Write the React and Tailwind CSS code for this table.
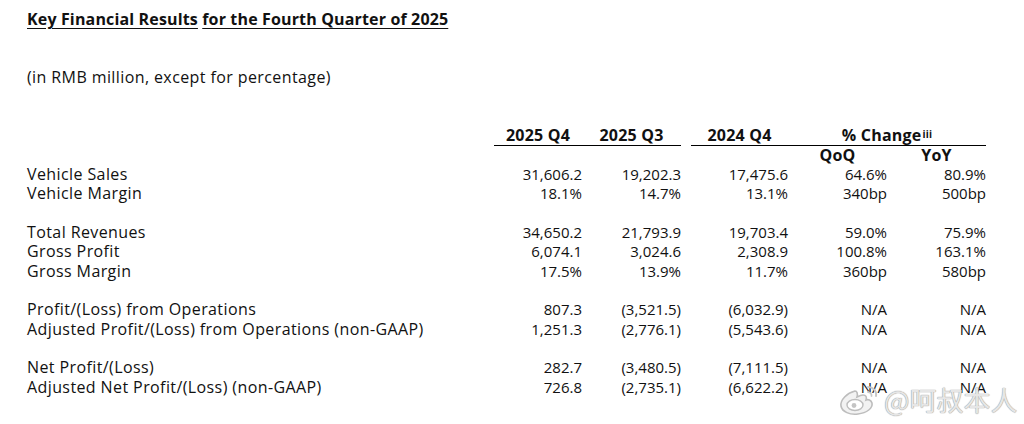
const groups = [
  [
    ['Vehicle Sales', '31,606.2', '19,202.3', '17,475.6', '64.6%', '80.9%'],
    ['Vehicle Margin', '18.1%', '14.7%', '13.1%', '340bp', '500bp'],
  ],
  [
    ['Total Revenues', '34,650.2', '21,793.9', '19,703.4', '59.0%', '75.9%'],
    ['Gross Profit', '6,074.1', '3,024.6', '2,308.9', '100.8%', '163.1%'],
    ['Gross Margin', '17.5%', '13.9%', '11.7%', '360bp', '580bp'],
  ],
  [
    ['Profit/(Loss) from Operations', '807.3', '(3,521.5)', '(6,032.9)', 'N/A', 'N/A'],
    ['Adjusted Profit/(Loss) from Operations (non-GAAP)', '1,251.3', '(2,776.1)', '(5,543.6)', 'N/A', 'N/A'],
  ],
  [
    ['Net Profit/(Loss)', '282.7', '(3,480.5)', '(7,111.5)', 'N/A', 'N/A'],
    ['Adjusted Net Profit/(Loss) (non-GAAP)', '726.8', '(2,735.1)', '(6,622.2)', 'N/A', 'N/A'],
  ],
];

const cols = 'grid grid-cols-[467px_88px_99px_10px_97px_99px_99px]';

function DataRow({ row }) {
  const [label, a, b, c, d, e] = row;
  return (
    <div className={`${cols} h-[19.33px] items-center leading-[19px]`}>
      <div className="whitespace-nowrap text-[16px] tracking-[0.4px]">{label}</div>
      <div className="text-right">{a}</div>
      <div className="text-right">{b}</div>
      <div />
      <div className="text-right">{c}</div>
      <div className="text-right">{d}</div>
      <div className="text-right">{e}</div>
    </div>
  );
}

function WeiboMark() {
  return (
    <div className="absolute left-[838px] top-[383px] flex items-center gap-[4px] pointer-events-none">
      <svg width="42" height="34" viewBox="0 0 42 34" fill="none">
        <path
          d="M17 8c-8 2-15 9-14 15 1 6 9 9 17 8 9-1 15-6 14-11-1-3-4-4-6-3 1-3 0-5-3-5-2 0-4 1-6 2 1-3 0-6-2-6z"
          fill="#f2f2f2"
          stroke="#bdbdbd"
          strokeWidth="1.6"
        />
        <ellipse cx="17" cy="22" rx="8" ry="5.5" fill="#ffffff" stroke="#bdbdbd" strokeWidth="1.4" />
        <circle cx="16" cy="22.5" r="2.4" fill="#c4c4c4" />
        <path d="M30 4c5 0 9 4 8 9" stroke="#c8c8c8" strokeWidth="2" strokeLinecap="round" />
        <path d="M30 9c2 0 4 2 3.5 4" stroke="#c8c8c8" strokeWidth="1.8" strokeLinecap="round" />
      </svg>
      <span className="font-['Noto_Sans_CJK_SC',sans-serif] text-[27px] leading-[32px] text-[#e6e6e6] [text-shadow:0_0_1px_#9a9a9a,0_0_1px_#9a9a9a]">
        @呵叔本人
      </span>
    </div>
  );
}

export default function App() {
  return (
    <div className="relative w-[1024px] h-[424px] bg-white text-[#111] font-['Open_Sans',sans-serif] text-[15px] overflow-hidden">
      <div className="pl-[27px] pt-[8px]">
        <h1 className="text-[16px] font-bold leading-[22px] tracking-[0.15px]">
          <span className="underline underline-offset-[3px]">Key Financial Results</span>{' '}
          <span className="underline underline-offset-[3px]">for the Fourth Quarter of 2025</span>
        </h1>
        <p className="mt-[36px] leading-[22px] text-[16px] tracking-[0.4px]">(in RMB million, except for percentage)</p>

        <div className="mt-[37px]">
          <div className={`${cols} h-[21px] items-center font-bold leading-[20px] text-[16px] tracking-[0.2px]`}>
            <div />
            <div className="border-b border-black h-full text-center">2025 Q4</div>
            <div className="border-b border-black h-full text-center">2025 Q3</div>
            <div />
            <div className="border-b border-black h-full text-center">2024 Q4</div>
            <div className="col-span-2 border-b border-black h-full text-center">
              % Change<sup className="text-[10px] relative -top-[3px] ml-[1px]">iii</sup>
            </div>
          </div>
          <div className={`${cols} h-[19px] items-center font-bold leading-[17px] text-[16px] tracking-[0.2px]`}>
            <div />
            <div />
            <div />
            <div />
            <div />
            <div className="text-center">QoQ</div>
            <div className="text-center">YoY</div>
          </div>
          {groups.map((g, i) => (
            <div key={i} className={i > 0 ? 'mt-[19.33px]' : ''}>
              {g.map((r) => (
                <DataRow key={r[0]} row={r} />
              ))}
            </div>
          ))}
        </div>
      </div>
      <WeiboMark />
    </div>
  );
}
